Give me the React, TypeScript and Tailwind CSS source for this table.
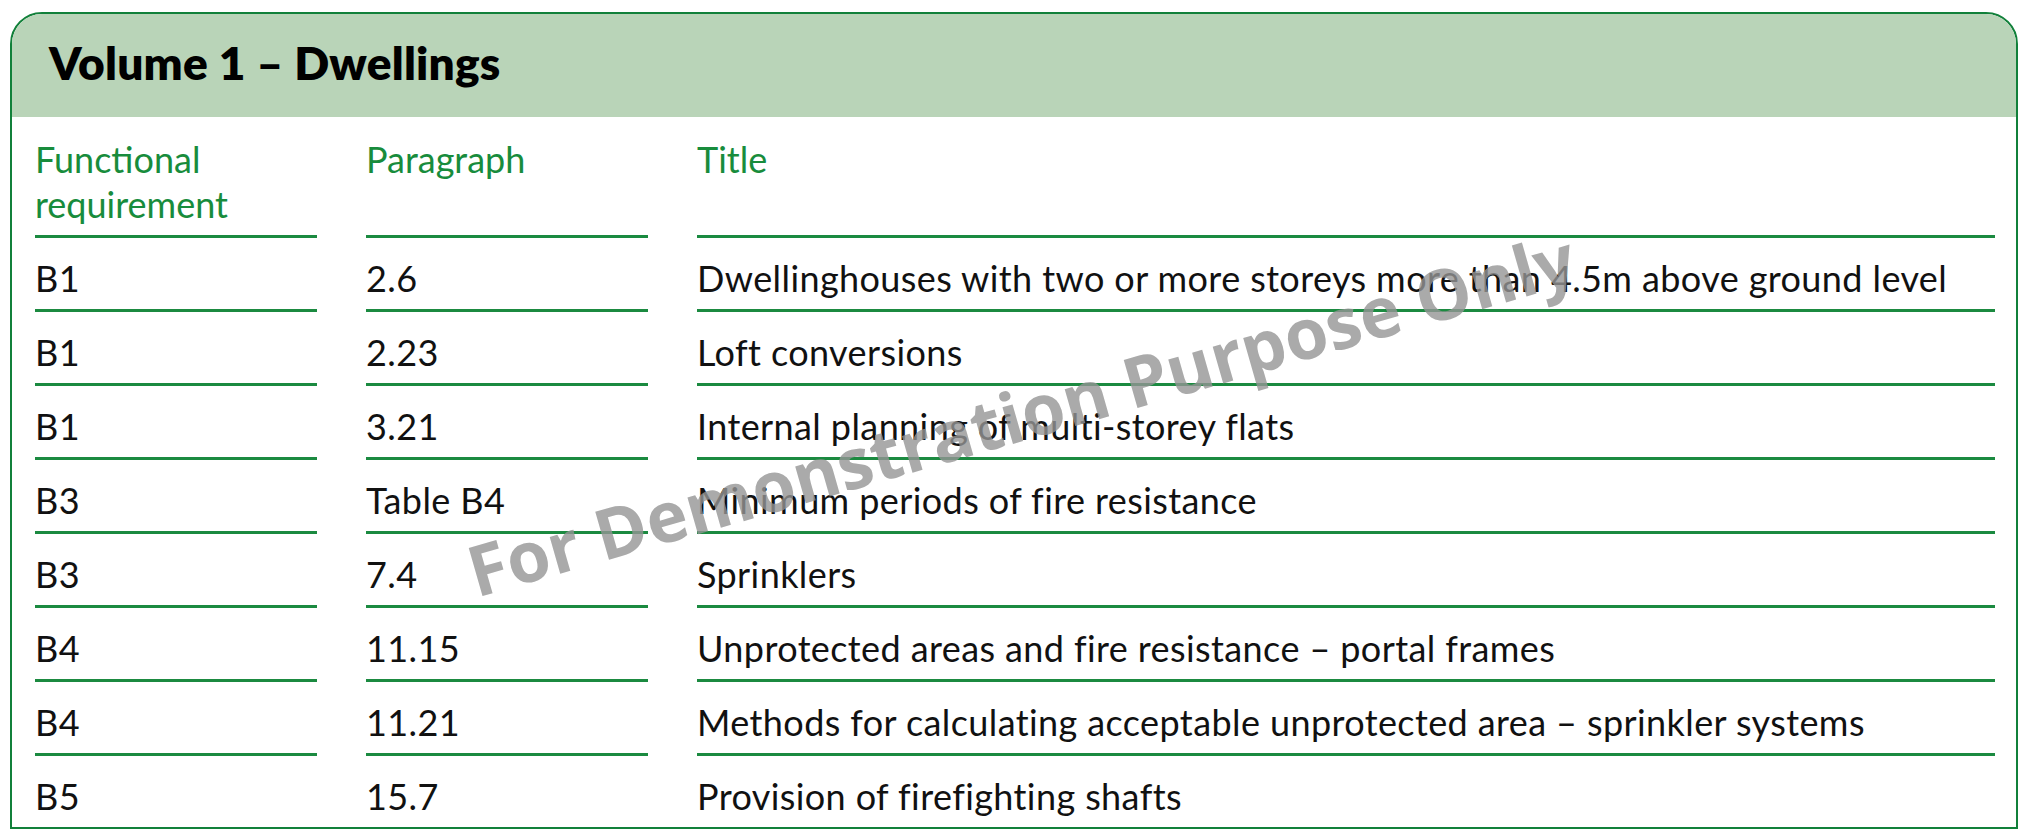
import React from "react";

// Row of the references table
interface RefRow {
  req: string;
  para: string;
  title: string;
}

const rows: RefRow[] = [
  { req: "B1", para: "2.6", title: "Dwellinghouses with two or more storeys more than 4.5m above ground level" },
  { req: "B1", para: "2.23", title: "Loft conversions" },
  { req: "B1", para: "3.21", title: "Internal planning of multi-storey flats" },
  { req: "B3", para: "Table B4", title: "Minimum periods of fire resistance" },
  { req: "B3", para: "7.4", title: "Sprinklers" },
  { req: "B4", para: "11.15", title: "Unprotected areas and fire resistance – portal frames" },
  { req: "B4", para: "11.21", title: "Methods for calculating acceptable unprotected area – sprinkler systems" },
  { req: "B5", para: "15.7", title: "Provision of firefighting shafts" },
];

export default function App() {
  return (
    <div className="w-[2030px] h-[839px] bg-white pl-[10px] pt-[12px] font-['Lato','Liberation_Sans',sans-serif]">
      <div className="relative w-[2008px] h-[817px] border-2 border-[#11803a] rounded-t-[32px] overflow-hidden">
        {/* Header band */}
        <div className="h-[103px] bg-[#b9d4b8] flex items-center pl-[37px] pb-[6px]">
          <h1 className="text-[46px] font-extrabold text-black tracking-[0.2px]">Volume 1 – Dwellings</h1>
        </div>

        {/* Table */}
        <div className="grid grid-cols-[282px_282px_1fr] gap-x-[49px] pl-[23px] pr-[21px]">
          {["Functional requirement", "Paragraph", "Title"].map((h) => (
            <div
              key={h}
              className="pt-[20px] pb-[8px] border-b-[3px] border-[#1b8a40] text-[36px] leading-[45px] text-[#188c3c]"
            >
              {h === "Functional requirement" ? (
                <>
                  Functional
                  <br />
                  requirement
                </>
              ) : (
                h
              )}
            </div>
          ))}

          {rows.map((r, i) => {
            const last = i === rows.length - 1;
            const cell = `pt-[18px] pb-[9px] text-[36px] leading-[44px] tracking-[0.4px] text-[#111] whitespace-nowrap ${
              last ? "border-b-[3px] border-transparent" : "border-b-[3px] border-[#1b8a40]"
            }`;
            return (
              <React.Fragment key={i}>
                <div className={cell}>{r.req}</div>
                <div className={cell}>{r.para}</div>
                <div className={cell}>{r.title}</div>
              </React.Fragment>
            );
          })}
        </div>

        {/* Watermark */}
        <div className="absolute left-[1009px] top-[400px] -translate-x-1/2 -translate-y-1/2 rotate-[-16deg] whitespace-nowrap font-['Open_Sans',sans-serif] font-bold text-[70px] text-[#959595] opacity-80 pointer-events-none">
          For Demonstration Purpose Only
        </div>
      </div>
    </div>
  );
}
